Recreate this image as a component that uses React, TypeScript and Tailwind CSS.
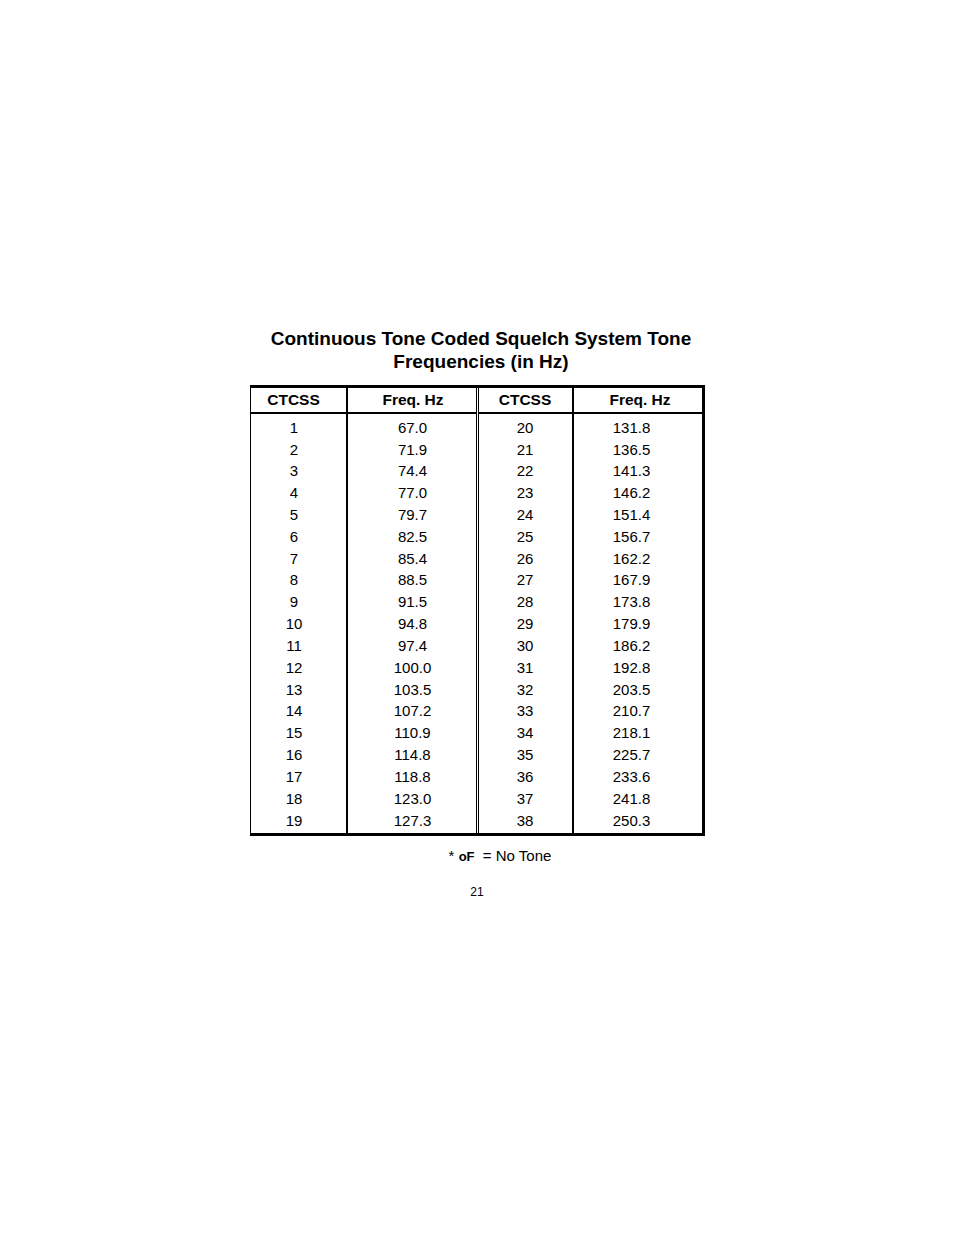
const ROWS: [string, string, string, string][] = [
  ["1", "67.0", "20", "131.8"],
  ["2", "71.9", "21", "136.5"],
  ["3", "74.4", "22", "141.3"],
  ["4", "77.0", "23", "146.2"],
  ["5", "79.7", "24", "151.4"],
  ["6", "82.5", "25", "156.7"],
  ["7", "85.4", "26", "162.2"],
  ["8", "88.5", "27", "167.9"],
  ["9", "91.5", "28", "173.8"],
  ["10", "94.8", "29", "179.9"],
  ["11", "97.4", "30", "186.2"],
  ["12", "100.0", "31", "192.8"],
  ["13", "103.5", "32", "203.5"],
  ["14", "107.2", "33", "210.7"],
  ["15", "110.9", "34", "218.1"],
  ["16", "114.8", "35", "225.7"],
  ["17", "118.8", "36", "233.6"],
  ["18", "123.0", "37", "241.8"],
  ["19", "127.3", "38", "250.3"],
];

function Column({
  head,
  values,
  className,
  headClass = "",
  cellClass = "",
}: {
  head: string;
  values: string[];
  className: string;
  headClass?: string;
  cellClass?: string;
}) {
  return (
    <div className={`flex flex-col ${className}`}>
      <div
        className={`flex h-[26px] items-center justify-center border-b-2 border-black text-[15.5px] font-bold ${headClass}`}
      >
        {head}
      </div>
      <div className="flex flex-col pt-[3px] pb-[1px]">
        {values.map((v, i) => (
          <div key={i} className={`flex h-[21.83px] items-center justify-center text-[15px] ${cellClass}`}>
            {v}
          </div>
        ))}
      </div>
    </div>
  );
}

export default function App() {
  return (
    <div
      className="flex min-h-[1235px] w-[954px] flex-col items-center bg-white pt-[327px] text-black"
      style={{ fontFamily: '"Liberation Sans", Arial, sans-serif' }}
    >
      <h1 className="pl-[8px] text-center text-[19px] font-bold leading-[23px]">
        Continuous Tone Coded Squelch System Tone
        <br />
        Frequencies (in Hz)
      </h1>

      <div className="mt-[12px] flex w-[455px] border-t-[3px] border-r-[3px] border-b-[3px] border-l-[1.5px] border-black">
        <Column
          head="CTCSS"
          values={ROWS.map((r) => r[0])}
          className="w-[95px]"
          headClass="pr-[9px]"
          cellClass="pr-[8px]"
        />
        <Column
          head="Freq. Hz"
          values={ROWS.map((r) => r[1])}
          className="w-[130px] border-l-2 border-black"
          headClass="pl-[3px]"
          cellClass="pl-[2px]"
        />
        <Column
          head="CTCSS"
          values={ROWS.map((r) => r[2])}
          className="w-[96px] border-l-[3px] border-double border-black"
        />
        <Column
          head="Freq. Hz"
          values={ROWS.map((r) => r[3])}
          className="flex-1 border-l-2 border-black"
          headClass="pl-[5px]"
          cellClass="pr-[12px]"
        />
      </div>

      <p className="mt-[11px] pl-[46px] text-[15px] leading-[18px]">
        * <span className="text-[13px] font-bold">oF</span> &nbsp;= No Tone
      </p>
      <p className="mt-[19px] text-[12px] leading-[14px]">21</p>
    </div>
  );
}
